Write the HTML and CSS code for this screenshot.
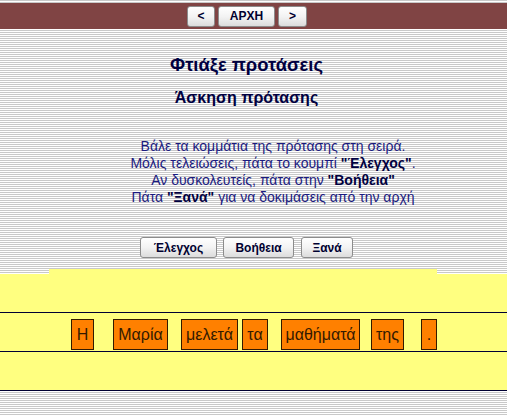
FILE: index.html
```html
<!DOCTYPE html>
<html lang="el">
<head>
<meta charset="utf-8">
<title>Φτιάξε προτάσεις</title>
<link rel="stylesheet" href="styles.css">
</head>
<body>
<div class="navbar">
  <div class="nav-inner">
    <button class="btn nav-btn nav-prev">&lt;</button>
    <button class="btn nav-btn nav-home">ΑΡΧΗ</button>
    <button class="btn nav-btn nav-next">&gt;</button>
  </div>
</div>
<div class="column">
  <h1 class="title">Φτιάξε προτάσεις</h1>
  <h2 class="subtitle">Άσκηση πρότασης</h2>
  <p class="instructions">
    Βάλε τα κομμάτια της πρότασης στη σειρά.<br>
    Μόλις τελειώσεις, πάτα το κουμπί <b>"Έλεγχος"</b>.<br>
    Αν δυσκολευτείς, πάτα στην <b>"Βοήθεια"</b><br>
    Πάτα <b>"Ξανά"</b> για να δοκιμάσεις από την αρχή
  </p>
  <div class="actions">
    <button class="btn action-btn btn-check">Έλεγχος</button>
    <button class="btn action-btn btn-help">Βοήθεια</button>
    <button class="btn action-btn btn-reset">Ξανά</button>
  </div>
</div>
<div class="tab"></div>
<div class="board">
  <div class="board-top"></div>
  <div class="drop-row">
    <div class="piece" style="left:71px;width:23px">Η</div>
    <div class="piece" style="left:113px;width:55px">Μαρία</div>
    <div class="piece" style="left:181px;width:57px">μελετά</div>
    <div class="piece" style="left:242px;width:26px">τα</div>
    <div class="piece" style="left:281px;width:79px">μαθήματά</div>
    <div class="piece" style="left:371px;width:33px">της</div>
    <div class="piece" style="left:421px;width:16px">.</div>
  </div>
  <div class="board-bottom"></div>
</div>
</body>
</html>
```

FILE: styles.css
```css
html, body {
  margin: 0;
  padding: 0;
}
body {
  min-height: 416px;
  background: repeating-linear-gradient(to bottom, #c9c9c9 0, #c9c9c9 1px, #ffffff 1px, #ffffff 2px);
  font-family: "Liberation Sans", Arial, sans-serif;
  color: #000050;
}
.navbar {
  margin-top: 3px;
  height: 26px;
  background: #804444;
}
.nav-inner {
  width: 494px;
  height: 26px;
  display: flex;
  justify-content: center;
  align-items: center;
  gap: 3px;
}
.btn {
  font-family: "Liberation Sans", Tahoma, sans-serif;
  font-weight: bold;
  font-size: 12px;
  color: #000030;
  height: 21px;
  padding: 0;
  border: 1px solid #8c8c8c;
  border-radius: 3px;
  background: linear-gradient(to bottom, #ffffff 0%, #f3f3f3 50%, #dcdcdc 100%);
  box-sizing: border-box;
  cursor: pointer;
}
.nav-prev { width: 28px; }
.nav-home { width: 57px; }
.nav-next { width: 29px; }
.column {
  width: 493px;
  text-align: center;
}
.title {
  margin: 26px 0 0;
  font-size: 18.4px;
  line-height: 20px;
  font-weight: bold;
  color: #000040;
}
.subtitle {
  margin: 14px 0 0;
  font-size: 16px;
  line-height: 17px;
  font-weight: bold;
  color: #000040;
}
.instructions {
  margin: 32px 0 0;
  padding-left: 53px;
  font-size: 14px;
  line-height: 17px;
  color: #1a1a80;
}
.instructions b {
  color: #000040;
}
.actions {
  margin-top: 31px;
  display: flex;
  justify-content: center;
  gap: 6px;
}
.btn-check { width: 77px; }
.btn-help { width: 71px; }
.btn-reset { width: 52px; margin-left: 1px; }
.tab {
  margin: 11px 0 0 49px;
  width: 388px;
  height: 5px;
  background: #ffff80;
}
.board {
  background: #ffff80;
}
.board-top {
  height: 38px;
  border-bottom: 1px solid #000033;
}
.drop-row {
  position: relative;
  height: 38px;
  border-bottom: 1px solid #000033;
}
.piece {
  position: absolute;
  top: 6px;
  height: 31px;
  box-sizing: border-box;
  background: #ff8000;
  border: 1px solid #331a00;
  font-size: 16px;
  line-height: 29px;
  text-align: center;
  color: #331a00;
}
.board-bottom {
  height: 38px;
  border-bottom: 1px solid #000033;
}
```
